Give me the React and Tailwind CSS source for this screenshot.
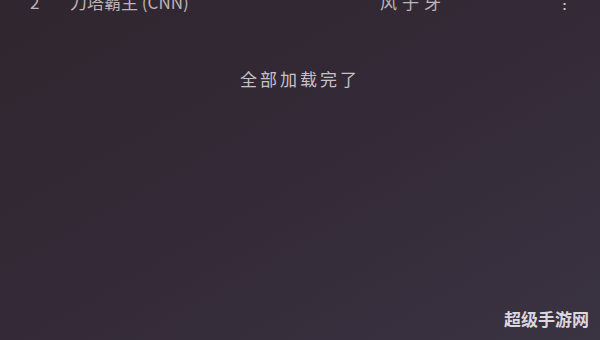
export default function App() {
  return (
    <div
      className="relative h-[340px] w-[600px] overflow-hidden bg-gradient-to-br from-[#30262f] via-[#342a37] to-[#3a3342]"
      style={{ fontFamily: '"Noto Sans CJK SC", "Noto Sans", sans-serif' }}
    >
      {/* cut-off list row */}
      <div className="-mt-[10px] flex h-[24px] items-center text-[17px] text-[#bdb4bd]">
        <span className="ml-[30px] w-[40px]">2</span>
        <span className="w-[310px]">刀塔霸主 (CNN)</span>
        <span className="w-[176px] tracking-[5px]">风子牙</span>
        <span className="text-[#d0c8d0]">⋮</span>
      </div>

      <div className="mt-[52px] text-center text-[17px] tracking-[3px] text-[#c9c1c9]">全部加载完了</div>

      <div className="absolute bottom-[9px] right-[11px] text-[17px] font-bold text-[#dcd6df]">超级手游网</div>
    </div>
  );
}
